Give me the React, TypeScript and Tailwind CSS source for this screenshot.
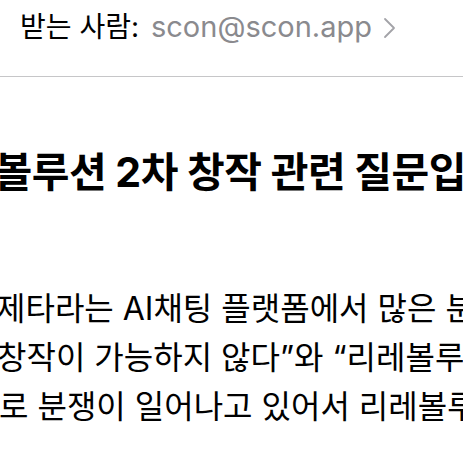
import React from 'react';

const FONT = "font-['Inter','Noto_Sans_CJK_KR',sans-serif]";

function Chevron() {
  return (
    <svg width="13" height="22" viewBox="0 0 13 22" fill="none" className="ml-[11px] mt-[2px]">
      <path d="M2 2 L11 11 L2 20" stroke="#a3a3a8" strokeWidth="1.8" strokeLinecap="round" strokeLinejoin="round" />
    </svg>
  );
}

export default function App() {
  const bodyLines = [
    { text: '제타라는 AI채팅 플랫폼에서 많은 분들이', ml: '-ml-[4px]' },
    { text: '창작이 가능하지 않다”와 “리레볼루션', ml: '-ml-[3px]' },
    { text: '로 분쟁이 일어나고 있어서 리레볼루션', ml: '-ml-[1px]' },
  ];

  return (
    <div className={`w-[463px] h-[463px] overflow-hidden bg-white text-black ${FONT}`}>
      {/* Recipient */}
      <div className="h-[77px] border-b border-[#c6c6c8] pl-5 pt-[9px]">
        <div className="flex items-center whitespace-nowrap leading-[36px]">
          <span className="text-[28px] text-black">받는 사람:</span>
          <span className="ml-[12px] text-[29px] text-[#8a8a8e]">scon@scon.app</span>
          <Chevron />
        </div>
      </div>

      {/* Subject */}
      <div className="pt-[72px] whitespace-nowrap">
        <div className="-ml-[80px] text-[41px] font-bold leading-[46px] tracking-[-0.5px]">
          리레볼루션 2차 창작 관련 질문입니다
        </div>
      </div>

      {/* Body */}
      <div className="pt-[89px] flex flex-col whitespace-nowrap text-[32px] leading-[49px]">
        {bodyLines.map((l) => (
          <div key={l.text} className={l.ml}>
            {l.text}
          </div>
        ))}
      </div>
    </div>
  );
}
